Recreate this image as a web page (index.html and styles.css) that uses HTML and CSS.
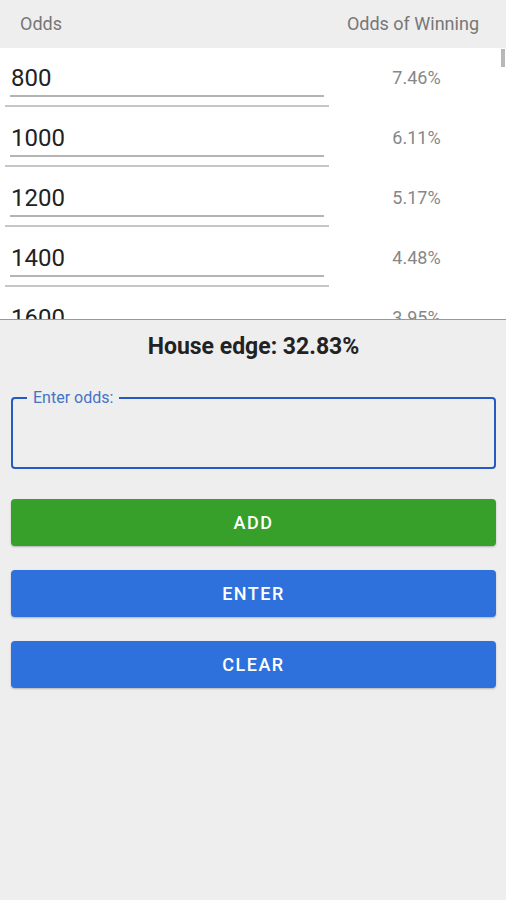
FILE: index.html
```html
<!DOCTYPE html>
<html lang="en">
<head>
<meta charset="UTF-8">
<meta name="viewport" content="width=device-width, initial-scale=1.0">
<title>Odds Calculator</title>
<link rel="stylesheet" href="styles.css">
</head>
<body>

<div class="app">
    <div class="table-head">
        <span>Odds</span>
        <span>Odds of Winning</span>
    </div>

    <div class="odds-list">
        <div class="scroll-thumb"></div>
        <div class="row">
            <div class="odds-cell"><div class="odds-field">800</div></div>
            <div class="chance">7.46%</div>
        </div>
        <div class="row">
            <div class="odds-cell"><div class="odds-field">1000</div></div>
            <div class="chance">6.11%</div>
        </div>
        <div class="row">
            <div class="odds-cell"><div class="odds-field">1200</div></div>
            <div class="chance">5.17%</div>
        </div>
        <div class="row">
            <div class="odds-cell"><div class="odds-field">1400</div></div>
            <div class="chance">4.48%</div>
        </div>
        <div class="row">
            <div class="odds-cell"><div class="odds-field">1600</div></div>
            <div class="chance">3.95%</div>
        </div>
    </div>

    <div class="panel">
        <div class="house-edge">House edge: 32.83%</div>

        <div class="input-box">
            <label for="oddsInput">Enter odds:</label>
            <input id="oddsInput" type="text" autocomplete="off">
        </div>

        <button class="btn btn-add">ADD</button>
        <button class="btn btn-blue">ENTER</button>
        <button class="btn btn-blue">CLEAR</button>
    </div>
</div>

</body>
</html>
```

FILE: styles.css
```css
body {
    margin: 0;
    font-family: Roboto, "Liberation Sans", sans-serif;
    background: #eeeeee;
    color: #222;
}
.app {
    width: 506px;
    height: 900px;
    display: flex;
    flex-direction: column;
}
.table-head {
    height: 47px;
    display: flex;
    align-items: center;
    justify-content: space-between;
    padding: 0 27px 1px 20px;
    font-size: 18px;
    color: #777;
    background: #eeeeee;
}
.odds-list {
    position: relative;
    height: 271px;
    overflow: hidden;
    background: #fff;
}
.scroll-thumb {
    position: absolute;
    top: 1px;
    right: 1px;
    width: 4px;
    height: 18px;
    background: #b8b8b8;
}
.row {
    display: flex;
    height: 60px;
}
.odds-cell {
    width: 324px;
    height: 59px;
    margin-left: 5px;
    padding: 0 5px;
    box-sizing: border-box;
    border-bottom: 2px solid #c6c6c6;
}
.odds-field {
    padding: 16px 0 3px 1px;
    font-size: 24px;
    line-height: 28px;
    color: #222;
    border-bottom: 2px solid #b4b4b4;
}
.chance {
    flex: 1;
    display: flex;
    align-items: center;
    justify-content: center;
    padding: 0 2px 1px 0;
    font-size: 18px;
    color: #878787;
}
.panel {
    flex: 1;
    border-top: 1px solid #999;
    padding: 13px 10px 0 11px;
    background: #eeeeee;
    display: flex;
    flex-direction: column;
}
.house-edge {
    text-align: center;
    font-size: 23px;
    line-height: 27px;
    font-weight: bold;
    color: #222;
}
.input-box {
    position: relative;
    height: 72px;
    margin-top: 37px;
    border: 2px solid #2759c5;
    border-radius: 4px;
    box-sizing: border-box;
}
.input-box label {
    position: absolute;
    top: -10px;
    left: 14px;
    padding: 0 6px 0 6px;
    font-size: 16px;
    line-height: 18px;
    color: #4473c6;
    background: #eeeeee;
}
.input-box input {
    width: 100%;
    height: 100%;
    box-sizing: border-box;
    border: none;
    outline: none;
    background: transparent;
    padding: 10px 16px 0;
    font-family: inherit;
    font-size: 18px;
}
.btn {
    height: 47px;
    margin-top: 24px;
    border: none;
    border-radius: 4px;
    font-family: inherit;
    font-size: 18px;
    font-weight: 500;
    letter-spacing: 1.5px;
    color: #fff;
    cursor: pointer;
    box-shadow: 0 1px 2px rgba(0,0,0,0.25);
}
.btn-add {
    margin-top: 30px;
    background: #36a02a;
}
.btn-blue {
    background: #2e71dd;
}
```
